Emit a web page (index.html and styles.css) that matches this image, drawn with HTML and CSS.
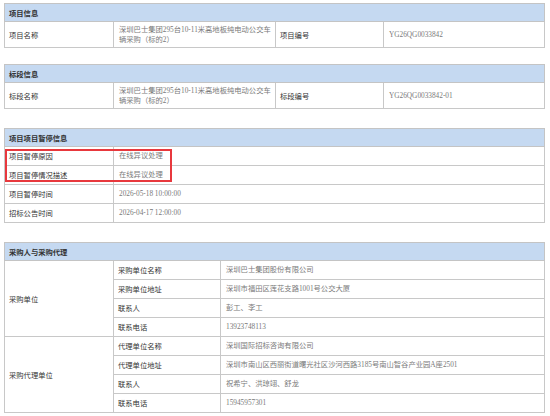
FILE: index.html
```html
<!DOCTYPE html>
<html lang="zh-CN">
<head>
<meta charset="utf-8">
<title>项目信息</title>
<link rel="stylesheet" href="styles.css">
</head>
<body>
<div class="page">
  <table class="info">
    <colgroup><col class="c-label"><col class="c-val"><col class="c-label2"><col></colgroup>
    <tr><th colspan="4" class="head">项目信息</th></tr>
    <tr class="tall">
      <td class="label">项目名称</td>
      <td class="val">深圳巴士集团295台10-11米高地板纯电动公交车辆采购（标的2）</td>
      <td class="label">项目编号</td>
      <td class="val">YG26QG0033842</td>
    </tr>
  </table>

  <table class="info">
    <colgroup><col class="c-label"><col class="c-val"><col class="c-label2"><col></colgroup>
    <tr><th colspan="4" class="head">标段信息</th></tr>
    <tr class="tall">
      <td class="label">标段名称</td>
      <td class="val">深圳巴士集团295台10-11米高地板纯电动公交车辆采购（标的2）</td>
      <td class="label">标段编号</td>
      <td class="val">YG26QG0033842-01</td>
    </tr>
  </table>

  <div class="wrap">
    <table class="info">
      <colgroup><col class="c-label"><col></colgroup>
      <tr><th colspan="2" class="head">项目项目暂停信息</th></tr>
      <tr><td class="label">项目暂停原因</td><td class="val">在线异议处理</td></tr>
      <tr><td class="label">项目暂停情况描述</td><td class="val">在线异议处理</td></tr>
      <tr><td class="label">项目暂停时间</td><td class="val">2026-05-18 10:00:00</td></tr>
      <tr><td class="label">招标公告时间</td><td class="val">2026-04-17 12:00:00</td></tr>
    </table>
    <div class="mark"></div>
  </div>

  <table class="info">
    <colgroup><col class="c-label"><col class="c-sub"><col></colgroup>
    <tr><th colspan="3" class="head">采购人与采购代理</th></tr>
    <tr><td class="label" rowspan="4">采购单位</td><td class="label">采购单位名称</td><td class="val">深圳巴士集团股份有限公司</td></tr>
    <tr><td class="label">采购单位地址</td><td class="val">深圳市福田区莲花支路1001号公交大厦</td></tr>
    <tr><td class="label">联系人</td><td class="val">彭工、李工</td></tr>
    <tr><td class="label">联系电话</td><td class="val">13923748113</td></tr>
    <tr><td class="label" rowspan="4">采购代理单位</td><td class="label">代理单位名称</td><td class="val">深圳国际招标咨询有限公司</td></tr>
    <tr><td class="label">代理单位地址</td><td class="val">深圳市南山区西丽街道曙光社区沙河西路3185号南山智谷产业园A座2501</td></tr>
    <tr><td class="label">联系人</td><td class="val">祝希宁、洪琼翊、舒龙</td></tr>
    <tr><td class="label">联系电话</td><td class="val">15945957301</td></tr>
  </table>
</div>
</body>
</html>
```

FILE: styles.css
```css
html, body {
  margin: 0;
  padding: 0;
  background: #ffffff;
}

.page {
  padding: 3px 5px 0 4px;
  font-family: "Noto Sans CJK SC", "Noto Sans", sans-serif;
  font-size: 7.3px;
  color: #333333;
}

.info {
  width: 541px;
  border-collapse: collapse;
  table-layout: fixed;
  border: 1px solid #c4c4c4;
  margin-bottom: 16px;
}

.c-label { width: 109px; }
.c-val { width: 162px; }
.c-label2 { width: 108px; }
.c-sub { width: 107px; }

.head {
  background: #c5d9f1;
  text-align: left;
  font-weight: bold;
  height: 17px;
  padding: 0 4px;
  line-height: 10px;
  border: 1px solid #c4c4c4;
}

.info td {
  border: 1px solid #c8c8c8;
  height: 18px;
  padding: 0 4px;
  line-height: 10px;
  vertical-align: middle;
}

.info tr.tall td {
  height: 25px;
}

.info td.val {
  padding-left: 5px;
  color: #7a7a7a;
  font-family: "Liberation Serif", "Noto Sans CJK SC", serif;
}

.wrap {
  position: relative;
  margin-top: 19px;
}

.wrap .info {
  margin-bottom: 19px;
}

.mark {
  position: absolute;
  left: 1px;
  top: 21px;
  width: 163px;
  height: 29px;
  border: 2px solid #e8383d;
}
```
